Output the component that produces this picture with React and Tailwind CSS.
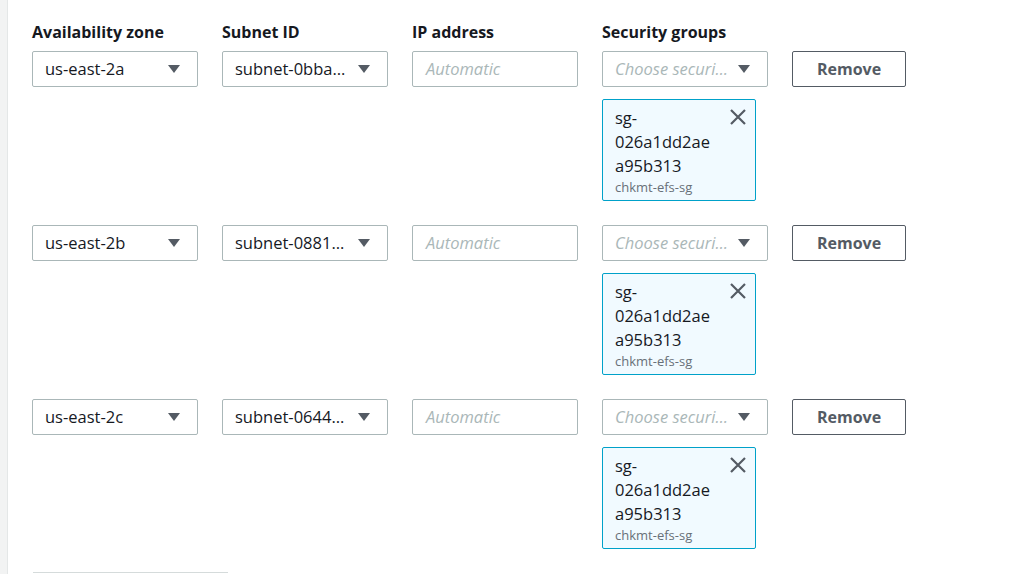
import React from 'react';

const rows = [
  { zone: 'us-east-2a', subnet: 'subnet-0bba…' },
  { zone: 'us-east-2b', subnet: 'subnet-0881…' },
  { zone: 'us-east-2c', subnet: 'subnet-0644…' },
];

const Caret = () => (
  <svg width="14" height="10" viewBox="0 0 14 10" className="shrink-0">
    <path d="M1 1 L13 1 L7 9 Z" fill="#545b64" />
  </svg>
);

const Select = ({ value, placeholder }) => (
  <div className="w-[166px] h-[36px] border border-[#aab7b8] rounded-[2px] bg-white flex items-center justify-between pl-[12px] pr-[16px]">
    {value ? (
      <span className="text-[16.5px] text-[#16191f] truncate">{value}</span>
    ) : (
      <span className="text-[16.5px] text-[#aab7b8] italic truncate">{placeholder}</span>
    )}
    <Caret />
  </div>
);

const Token = () => (
  <div className="w-[154px] h-[102px] border border-[#00a1c9] bg-[#f1faff] rounded-[2px] flex justify-between pl-[12px] pr-[8px] pt-[6px]">
    <div className="flex flex-col">
      <span className="text-[16.5px] leading-[24px] text-[#16191f]">sg-</span>
      <span className="text-[16.5px] leading-[24px] text-[#16191f]">026a1dd2ae</span>
      <span className="text-[16.5px] leading-[24px] text-[#16191f]">a95b313</span>
      <span className="text-[13px] leading-[18px] text-[#687078]">chkmt-efs-sg</span>
    </div>
    <svg width="18" height="18" viewBox="0 0 18 18" className="mt-[2px]">
      <path d="M2 2 L16 16 M16 2 L2 16" stroke="#545b64" strokeWidth="2.2" fill="none" />
    </svg>
  </div>
);

export default function App() {
  return (
    <div className="w-[1024px] h-[574px] overflow-hidden bg-white flex" style={{ fontFamily: '"Open Sans", "Noto Sans", sans-serif' }}>
      <div className="w-[8px] shrink-0 bg-[#f2f3f3] border-r border-[#e4e7e7]" />
      <div className="flex flex-col pl-[24px] pt-[20px]">
        <div className="flex gap-[24px] text-[16px] font-bold text-[#16191f] leading-[24px] mb-[7px]">
          <div className="w-[166px]">Availability zone</div>
          <div className="w-[166px]">Subnet ID</div>
          <div className="w-[166px]">IP address</div>
          <div className="w-[166px]">Security groups</div>
        </div>
        <div className="flex flex-col gap-[24px]">
          {rows.map((r) => (
            <div key={r.zone} className="flex gap-[24px] items-start">
              <Select value={r.zone} />
              <Select value={r.subnet} />
              <div className="w-[166px] h-[36px] border border-[#aab7b8] rounded-[2px] flex items-center pl-[13px]">
                <span className="text-[16.5px] italic text-[#aab7b8]">Automatic</span>
              </div>
              <div className="flex flex-col gap-[12px]">
                <Select placeholder="Choose securi…" />
                <Token />
              </div>
              <button className="w-[114px] h-[36px] border border-[#545b64] rounded-[2px] text-[16px] font-bold text-[#545b64] bg-white">
                Remove
              </button>
            </div>
          ))}
        </div>
        <div className="mt-[23px] ml-[1px] w-[195px] h-[30px] border-t border-[#d5dbdb]" />
      </div>
    </div>
  );
}
